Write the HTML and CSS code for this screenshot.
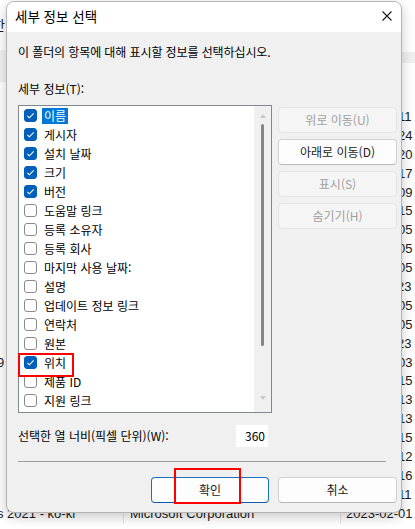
FILE: index.html
```html
<!DOCTYPE html>
<html lang="ko">
<head>
<meta charset="utf-8">
<title>세부 정보 선택</title>
<link rel="stylesheet" href="styles.css">
</head>
<body>
  <!-- Explorer window behind the dialog -->
  <div class="explorer">
    <div class="exp-top"><span class="exp-head">한</span></div>
    <div class="exp-band"><div class="band-main"></div><div class="band-end"></div></div>
    <div class="exp-list">
      <div class="exp-row"><span class="c-name"></span><span class="c-pub"></span><span class="c-date">2023-01-11</span></div>
      <div class="exp-row"><span class="c-name"></span><span class="c-pub"></span><span class="c-date">2023-01-24</span></div>
      <div class="exp-row"><span class="c-name"></span><span class="c-pub"></span><span class="c-date">2022-12-20</span></div>
      <div class="exp-row"><span class="c-name"></span><span class="c-pub"></span><span class="c-date">2023-01-17</span></div>
      <div class="exp-row"><span class="c-name"></span><span class="c-pub"></span><span class="c-date">2022-12-09</span></div>
      <div class="exp-row"><span class="c-name"></span><span class="c-pub"></span><span class="c-date">2023-01-15</span></div>
      <div class="exp-row"><span class="c-name"></span><span class="c-pub"></span><span class="c-date">2022-12-05</span></div>
      <div class="exp-row"><span class="c-name"></span><span class="c-pub"></span><span class="c-date">2022-12-05</span></div>
      <div class="exp-row"><span class="c-name"></span><span class="c-pub"></span><span class="c-date">2022-12-05</span></div>
      <div class="exp-row"><span class="c-name"></span><span class="c-pub"></span><span class="c-date">2022-11-23</span></div>
      <div class="exp-row"><span class="c-name"></span><span class="c-pub"></span><span class="c-date">2022-12-05</span></div>
      <div class="exp-row"><span class="c-name"></span><span class="c-pub"></span><span class="c-date">2022-12-05</span></div>
      <div class="exp-row"><span class="c-name"></span><span class="c-pub"></span><span class="c-date">2022-11-23</span></div>
      <div class="exp-row"><span class="c-name cut">9</span><span class="c-pub"></span><span class="c-date">2023-01-03</span></div>
      <div class="exp-row"><span class="c-name"></span><span class="c-pub"></span><span class="c-date">2023-01-15</span></div>
      <div class="exp-row"><span class="c-name"></span><span class="c-pub"></span><span class="c-date">2023-01-13</span></div>
      <div class="exp-row"><span class="c-name"></span><span class="c-pub"></span><span class="c-date">2022-12-13</span></div>
      <div class="exp-row"><span class="c-name"></span><span class="c-pub"></span><span class="c-date">2022-12-15</span></div>
      <div class="exp-row"><span class="c-name"></span><span class="c-pub"></span><span class="c-date">2022-12-12</span></div>
      <div class="exp-row"><span class="c-name"></span><span class="c-pub"></span><span class="c-date">2022-12-16</span></div>
      <div class="exp-row"><span class="c-name"></span><span class="c-pub"></span><span class="c-date">2023-01-11</span></div>
      <div class="exp-row"><span class="c-name cut">s 2021 - ko-kr</span><span class="c-pub">Microsoft Corporation</span><span class="c-date">2023-02-01</span></div>
    </div>
  </div>

  <!-- Choose Details dialog -->
  <div class="dialog">
    <div class="titlebar">
      <span class="title">세부 정보 선택</span>
      <svg class="close" viewBox="0 0 10 10" aria-label="닫기"><path d="M0.5 0.5L9.5 9.5M9.5 0.5L0.5 9.5"/></svg>
    </div>
    <div class="content">
      <p class="desc">이 폴더의 항목에 대해 표시할 정보를 선택하십시오.</p>
      <p class="label">세부 정보(T):</p>
      <div class="main">
        <div class="listbox">
          <ul class="items">
            <li class="item"><span class="cb on"><svg viewBox="0 0 13 13"><path d="M3.3 6.8L5.4 8.8L9.7 4.4"/></svg></span><span class="item-text sel">이름</span></li>
            <li class="item"><span class="cb on"><svg viewBox="0 0 13 13"><path d="M3.3 6.8L5.4 8.8L9.7 4.4"/></svg></span><span class="item-text">게시자</span></li>
            <li class="item"><span class="cb on"><svg viewBox="0 0 13 13"><path d="M3.3 6.8L5.4 8.8L9.7 4.4"/></svg></span><span class="item-text">설치 날짜</span></li>
            <li class="item"><span class="cb on"><svg viewBox="0 0 13 13"><path d="M3.3 6.8L5.4 8.8L9.7 4.4"/></svg></span><span class="item-text">크기</span></li>
            <li class="item"><span class="cb on"><svg viewBox="0 0 13 13"><path d="M3.3 6.8L5.4 8.8L9.7 4.4"/></svg></span><span class="item-text">버전</span></li>
            <li class="item"><span class="cb"></span><span class="item-text">도움말 링크</span></li>
            <li class="item"><span class="cb"></span><span class="item-text">등록 소유자</span></li>
            <li class="item"><span class="cb"></span><span class="item-text">등록 회사</span></li>
            <li class="item"><span class="cb"></span><span class="item-text">마지막 사용 날짜:</span></li>
            <li class="item"><span class="cb"></span><span class="item-text">설명</span></li>
            <li class="item"><span class="cb"></span><span class="item-text">업데이트 정보 링크</span></li>
            <li class="item"><span class="cb"></span><span class="item-text">연락처</span></li>
            <li class="item"><span class="cb"></span><span class="item-text">원본</span></li>
            <li class="item"><span class="cb on"><svg viewBox="0 0 13 13"><path d="M3.3 6.8L5.4 8.8L9.7 4.4"/></svg></span><span class="item-text">위치</span></li>
            <li class="item"><span class="cb"></span><span class="item-text">제품 ID</span></li>
            <li class="item"><span class="cb"></span><span class="item-text">지원 링크</span></li>
          </ul>
          <div class="vscroll">
            <span class="arrow up"></span>
            <span class="thumb"></span>
            <span class="arrow down"></span>
          </div>
          <span class="mark mark-row"></span>
        </div>
        <div class="side">
          <button class="btn" disabled>위로 이동(U)</button>
          <button class="btn">아래로 이동(D)</button>
          <button class="btn" disabled>표시(S)</button>
          <button class="btn" disabled>숨기기(H)</button>
        </div>
      </div>
      <div class="width-row">
        <span class="width-label">선택한 열 너비(픽셀 단위)(W):</span>
        <span class="num">360</span>
      </div>
      <div class="sep"></div>
      <div class="actions">
        <button class="btn ok">확인</button>
        <button class="btn cancel">취소</button>
        <span class="mark mark-ok"></span>
      </div>
    </div>
  </div>
</body>
</html>
```

FILE: styles.css
```css
* {
  box-sizing: border-box;
}

html,
body {
  margin: 0;
  padding: 0;
}

body {
  width: 415px;
  height: 529px;
  overflow: hidden;
  position: relative;
  background: #ffffff;
  font-family: "Noto Sans CJK KR", "Noto Sans", sans-serif;
  color: #000000;
}

/* ---------- explorer window in the background ---------- */
.explorer {
  font-family: "Liberation Sans", "Noto Sans CJK KR", sans-serif;
  font-size: 13px;
  color: #1b1b1b;
}

.exp-top {
  height: 50px;
  padding-top: 16px;
}

.exp-head {
  display: block;
  margin-left: -7px;
  font-family: "Noto Sans CJK KR", sans-serif;
  font-size: 13px;
  line-height: 18px;
}

.exp-band {
  display: flex;
  height: 32px;
}

.band-main {
  flex: 1;
  background: #f1f1f1;
}

.band-end {
  width: 13px;
  height: 11px;
  margin-top: 2px;
  background: #f0f0f0;
}

.exp-list {
  padding-top: 26px;
}

.exp-row {
  display: grid;
  grid-template-columns: 123px 217px 1fr;
  height: 18.9px;
  line-height: 18.9px;
  white-space: nowrap;
}

.c-name.cut {
  margin-left: -3px;
}

.c-pub {
  padding-left: 6px;
  border-left: 1px solid #e6e6e6;
}

.c-date {
  padding-left: 5px;
  border-left: 1px solid #e6e6e6;
}

/* ---------- dialog ---------- */
.dialog {
  position: absolute;
  left: 6px;
  top: 1px;
  width: 396px;
  height: 512px;
  border: 1px solid #b4b4b4;
  border-radius: 8px;
  background: #f0f0f0;
  overflow: hidden;
  box-shadow: 0 4px 12px rgba(0, 0, 0, 0.22);
}

.titlebar {
  height: 30px;
  background: #ffffff;
  display: flex;
  justify-content: space-between;
  align-items: flex-start;
  padding: 0 9px 0 8px;
}

.title {
  font-size: 13.5px;
  line-height: 28px;
  color: #000000;
}

.close {
  width: 10px;
  height: 10px;
  margin-top: 9px;
  fill: none;
  stroke: #1a1a1a;
  stroke-width: 1.1;
}

.content {
  padding: 0 4px 0 11px;
  font-size: 12px;
}

.desc,
.label {
  margin: 0;
  line-height: 16px;
}

.desc {
  margin-top: 12px;
  letter-spacing: -0.1px;
}

.label {
  margin-top: 21px;
}

.main {
  margin-top: 8px;
  display: grid;
  grid-template-columns: 254px 119px;
  column-gap: 6px;
  align-items: start;
}

/* list of columns with check boxes */
.listbox {
  position: relative;
  height: 308px;
  border: 1px solid #828790;
  background: #ffffff;
  display: flex;
}

.items {
  flex: 1;
  list-style: none;
  margin: 0;
  padding: 0;
  overflow: hidden;
}

.item {
  height: 19px;
  display: flex;
  align-items: center;
  white-space: nowrap;
}

.cb {
  flex: none;
  width: 13px;
  height: 13px;
  margin-left: 5px;
  border: 1px solid #8a8a8a;
  border-radius: 3px;
  background: #ffffff;
  display: flex;
  align-items: center;
  justify-content: center;
}

.cb.on {
  background: #005fb8;
  border-color: #005fb8;
}

.cb svg {
  width: 13px;
  height: 13px;
  flex: none;
  fill: none;
  stroke: #ffffff;
  stroke-width: 1.1;
}

.item-text {
  margin-left: 5px;
  padding: 0 2px;
  line-height: 16px;
}

.item-text.sel {
  background: #0078d7;
  color: #ffffff;
}

.vscroll {
  flex: none;
  width: 17px;
  background: #f0f0f0;
  display: flex;
  flex-direction: column;
  align-items: center;
  padding: 8px 0 12px;
}

.arrow {
  width: 0;
  height: 0;
  border-left: 3.5px solid transparent;
  border-right: 3.5px solid transparent;
}

.arrow.up {
  border-bottom: 4px solid #c9c9c9;
}

.arrow.down {
  margin-top: auto;
  border-top: 4px solid #c9c9c9;
}

.thumb {
  width: 3px;
  height: 222px;
  margin-top: 6px;
  border-radius: 2px;
  background: #868686;
}

/* command buttons */
.side {
  display: flex;
  flex-direction: column;
  gap: 6px;
  padding-top: 2px;
}

.btn {
  height: 26px;
  padding: 0;
  border: 1px solid #d1d1d1;
  border-bottom-color: #b9b9b9;
  border-radius: 4px;
  background: #fdfdfd;
  font-family: "Noto Sans CJK KR", sans-serif;
  font-size: 12px;
  line-height: 24px;
  color: #1b1b1b;
  text-align: center;
}

.btn:disabled {
  background: #f5f5f5;
  border-color: #e5e5e5;
  color: #a0a0a0;
}

.width-row {
  width: 250px;
  margin-top: 12px;
  height: 22px;
  display: flex;
  align-items: center;
}

.width-label {
  line-height: 16px;
}

.num {
  margin-left: auto;
  width: 32px;
  height: 22px;
  padding-right: 3px;
  background: #ffffff;
  line-height: 22px;
  text-align: right;
}

.sep {
  width: 368px;
  margin-top: 14px;
  border-top: 1px solid #a0a0a0;
}

.actions {
  position: relative;
  margin-top: 15px;
  display: flex;
  justify-content: flex-end;
  gap: 9px;
}

.btn.ok {
  width: 118px;
  border-color: #1a6fc4;
  border-bottom-color: #0f5aa8;
}

.btn.cancel {
  width: 119px;
}

/* red highlight frames */
.mark {
  position: absolute;
  border: 2px solid #ff0000;
  pointer-events: none;
}

.mark-row {
  left: -1px;
  top: 247px;
  width: 56px;
  height: 24px;
}

.mark-ok {
  left: 156px;
  top: -9px;
  width: 67px;
  height: 36px;
}
```
